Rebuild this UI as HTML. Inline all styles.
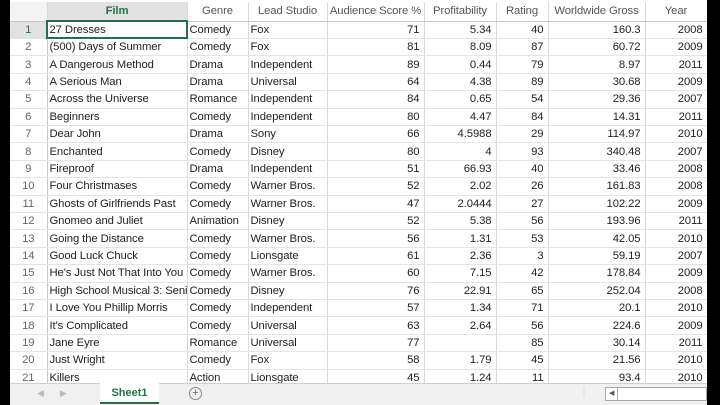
<!DOCTYPE html>
<html><head><meta charset="utf-8"><style>
*{margin:0;padding:0;box-sizing:border-box}
body{width:720px;height:405px;background:#000;position:relative;overflow:hidden;font-family:"Liberation Sans",sans-serif}
#sheet{position:absolute;left:10px;top:0;width:697px;height:405px;background:#fff;overflow:hidden}
table{border-collapse:collapse;table-layout:fixed;position:absolute;left:0;top:2px;width:697px}
td{height:17.42px;font-size:11.3px;color:#222;border-right:1px solid #dadada;border-bottom:1px solid #e4e4e4;padding:0 2px;white-space:nowrap;overflow:hidden;letter-spacing:-0.1px}
td.n{text-align:right;padding-right:4px}
td.h{background:#fff;color:#666;text-align:center;border-bottom:1px solid #c8c8c8}
td.r{color:#666;text-align:center;border-right:1px solid #c8c8c8;background:#fff}
tr.hd td{height:19px;color:#555;text-align:center}
#tabs{position:absolute;left:0;top:383px;width:697px;height:22px;background:#f0f0f0;border-top:1px solid #d0d0d0}
</style></head><body><div id="sheet">
<table>
<colgroup><col style="width:37px"><col style="width:140px"><col style="width:61px"><col style="width:79px"><col style="width:97px"><col style="width:72px"><col style="width:52px"><col style="width:97px"><col style="width:62px"></colgroup>
<tr class="hd"><td class="h" style="background:#f3f3f3"></td><td class="h" style="color:#217346;font-weight:bold;background:#e2e2e2;border-bottom:2px solid #217346">Film</td><td class="h">Genre</td><td class="h">Lead Studio</td><td class="h">Audience Score %</td><td class="h">Profitability</td><td class="h">Rating</td><td class="h">Worldwide Gross</td><td class="h">Year</td></tr>
<tr><td class="r" style="color:#217346;background:#e2e2e2">1</td><td style="outline:2px solid #217346;outline-offset:-1px">27 Dresses</td><td>Comedy</td><td>Fox</td><td class="n">71</td><td class="n">5.34</td><td class="n">40</td><td class="n">160.3</td><td class="n">2008</td></tr>
<tr><td class="r">2</td><td>(500) Days of Summer</td><td>Comedy</td><td>Fox</td><td class="n">81</td><td class="n">8.09</td><td class="n">87</td><td class="n">60.72</td><td class="n">2009</td></tr>
<tr><td class="r">3</td><td>A Dangerous Method</td><td>Drama</td><td>Independent</td><td class="n">89</td><td class="n">0.44</td><td class="n">79</td><td class="n">8.97</td><td class="n">2011</td></tr>
<tr><td class="r">4</td><td>A Serious Man</td><td>Drama</td><td>Universal</td><td class="n">64</td><td class="n">4.38</td><td class="n">89</td><td class="n">30.68</td><td class="n">2009</td></tr>
<tr><td class="r">5</td><td>Across the Universe</td><td>Romance</td><td>Independent</td><td class="n">84</td><td class="n">0.65</td><td class="n">54</td><td class="n">29.36</td><td class="n">2007</td></tr>
<tr><td class="r">6</td><td>Beginners</td><td>Comedy</td><td>Independent</td><td class="n">80</td><td class="n">4.47</td><td class="n">84</td><td class="n">14.31</td><td class="n">2011</td></tr>
<tr><td class="r">7</td><td>Dear John</td><td>Drama</td><td>Sony</td><td class="n">66</td><td class="n">4.5988</td><td class="n">29</td><td class="n">114.97</td><td class="n">2010</td></tr>
<tr><td class="r">8</td><td>Enchanted</td><td>Comedy</td><td>Disney</td><td class="n">80</td><td class="n">4</td><td class="n">93</td><td class="n">340.48</td><td class="n">2007</td></tr>
<tr><td class="r">9</td><td>Fireproof</td><td>Drama</td><td>Independent</td><td class="n">51</td><td class="n">66.93</td><td class="n">40</td><td class="n">33.46</td><td class="n">2008</td></tr>
<tr><td class="r">10</td><td>Four Christmases</td><td>Comedy</td><td>Warner Bros.</td><td class="n">52</td><td class="n">2.02</td><td class="n">26</td><td class="n">161.83</td><td class="n">2008</td></tr>
<tr><td class="r">11</td><td>Ghosts of Girlfriends Past</td><td>Comedy</td><td>Warner Bros.</td><td class="n">47</td><td class="n">2.0444</td><td class="n">27</td><td class="n">102.22</td><td class="n">2009</td></tr>
<tr><td class="r">12</td><td>Gnomeo and Juliet</td><td>Animation</td><td>Disney</td><td class="n">52</td><td class="n">5.38</td><td class="n">56</td><td class="n">193.96</td><td class="n">2011</td></tr>
<tr><td class="r">13</td><td>Going the Distance</td><td>Comedy</td><td>Warner Bros.</td><td class="n">56</td><td class="n">1.31</td><td class="n">53</td><td class="n">42.05</td><td class="n">2010</td></tr>
<tr><td class="r">14</td><td>Good Luck Chuck</td><td>Comedy</td><td>Lionsgate</td><td class="n">61</td><td class="n">2.36</td><td class="n">3</td><td class="n">59.19</td><td class="n">2007</td></tr>
<tr><td class="r">15</td><td>He's Just Not That Into You</td><td>Comedy</td><td>Warner Bros.</td><td class="n">60</td><td class="n">7.15</td><td class="n">42</td><td class="n">178.84</td><td class="n">2009</td></tr>
<tr><td class="r">16</td><td>High School Musical 3: Senior Year</td><td>Comedy</td><td>Disney</td><td class="n">76</td><td class="n">22.91</td><td class="n">65</td><td class="n">252.04</td><td class="n">2008</td></tr>
<tr><td class="r">17</td><td>I Love You Phillip Morris</td><td>Comedy</td><td>Independent</td><td class="n">57</td><td class="n">1.34</td><td class="n">71</td><td class="n">20.1</td><td class="n">2010</td></tr>
<tr><td class="r">18</td><td>It's Complicated</td><td>Comedy</td><td>Universal</td><td class="n">63</td><td class="n">2.64</td><td class="n">56</td><td class="n">224.6</td><td class="n">2009</td></tr>
<tr><td class="r">19</td><td>Jane Eyre</td><td>Romance</td><td>Universal</td><td class="n">77</td><td class="n"></td><td class="n">85</td><td class="n">30.14</td><td class="n">2011</td></tr>
<tr><td class="r">20</td><td>Just Wright</td><td>Comedy</td><td>Fox</td><td class="n">58</td><td class="n">1.79</td><td class="n">45</td><td class="n">21.56</td><td class="n">2010</td></tr>
<tr><td class="r">21</td><td>Killers</td><td>Action</td><td>Lionsgate</td><td class="n">45</td><td class="n">1.24</td><td class="n">11</td><td class="n">93.4</td><td class="n">2010</td></tr>
</table>
<div id="tabs">
<span style="position:absolute;left:27px;top:4px;font-size:9px;color:#bbb">&#9664;</span>
<span style="position:absolute;left:50px;top:4px;font-size:9px;color:#bbb">&#9654;</span>
<div style="position:absolute;left:90px;top:-1px;width:59px;height:21px;background:#fff;border-bottom:2px solid #217346;color:#217346;font-weight:bold;font-size:11px;text-align:center;line-height:20px">Sheet1</div>
<div style="position:absolute;left:179px;top:3px;width:13px;height:13px;border:1px solid #888;border-radius:50%;font-size:11px;line-height:11px;text-align:center;color:#666">+</div>
<span style="position:absolute;left:569px;top:3px;font-size:10px;color:#aaa">&#8942;</span>
<div style="position:absolute;left:595px;top:3px;width:102px;height:14px;background:#fff;border:1px solid #aaa"><span style="position:absolute;left:3px;top:1px;font-size:7px;color:#555">&#9664;</span><div style="position:absolute;left:11px;top:0;width:1px;height:12px;background:#aaa"></div></div>
</div>
</div></body></html>
